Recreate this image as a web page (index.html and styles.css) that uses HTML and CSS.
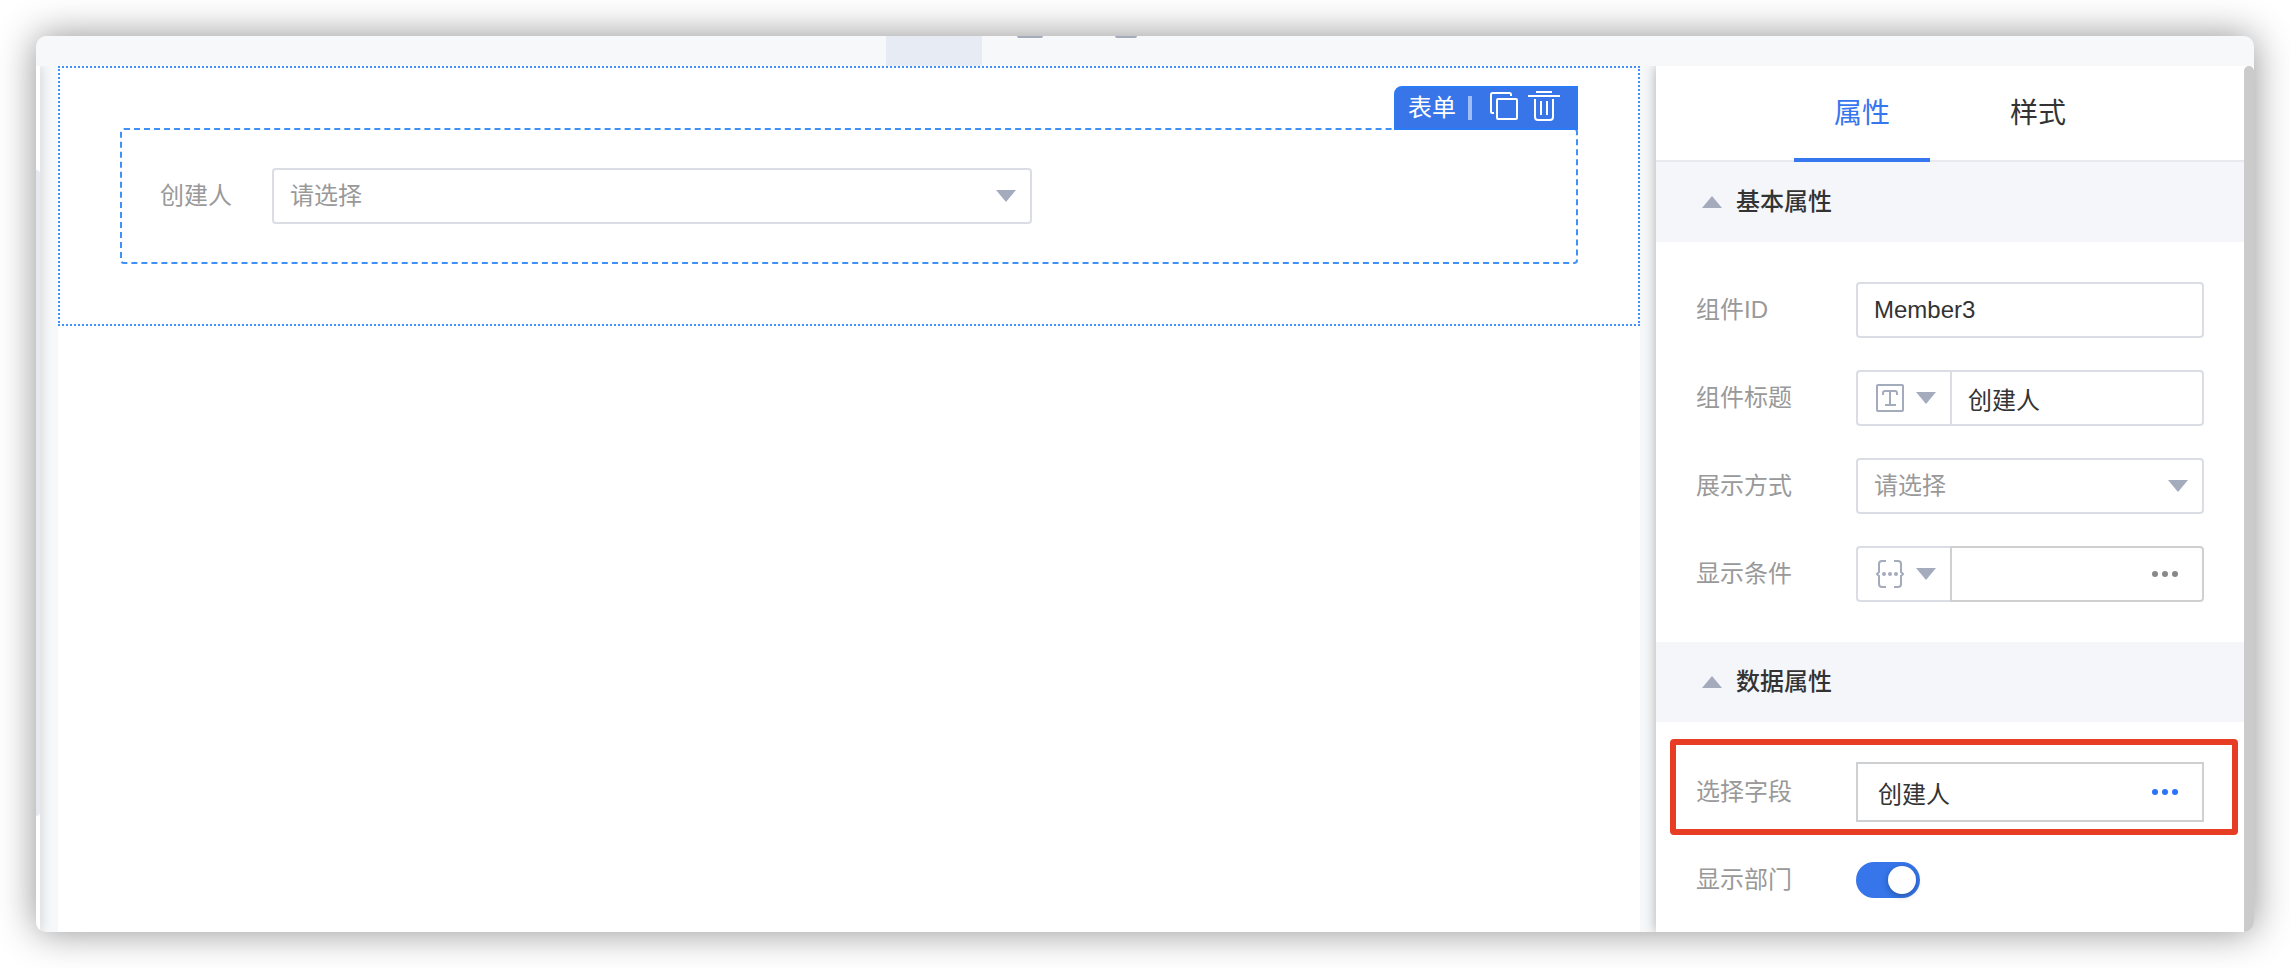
FILE: index.html
```
<!DOCTYPE html>
<html lang="zh-CN">

<head>
    <meta charset="UTF-8">
    <meta name="viewport" content="width=device-width, initial-scale=1.0">
    <title>表单设计</title>
    <link rel="stylesheet" href="styles.css">
</head>

<body>

    <div class="window">
        <header class="topbar">
            <span class="topbar-active"></span>
            <span class="topbar-icon icon-wide"></span>
            <span class="topbar-icon"></span>
        </header>

        <div class="content">
            <div class="side-strip">
                <div class="side-thumb"></div>
            </div>

            <main class="workspace">
                <div class="page">
                    <div class="container">
                        <div class="form-box">
                            <div class="toolbar">
                                <span>表单</span>
                                <span class="divider"></span>
                                <button type="button" class="tool-btn copy-btn" aria-label="复制">
                                    <svg width="28" height="28" viewBox="0 0 28 28" fill="none" stroke="#fff" stroke-width="2">
                                        <path d="M4 21H2.500Q1 21 1 19.500V2.500Q1 1 2.500 1H19.500Q21 1 21 2.500V4" />
                                        <rect x="7" y="7" width="20" height="20" rx="1" />
                                    </svg>
                                </button>
                                <button type="button" class="tool-btn" aria-label="删除">
                                    <svg width="32" height="30" viewBox="0 0 32 30" fill="none" stroke="#fff" stroke-width="2">
                                        <path d="M8 1H24M0 5H32M7 8V26Q7 29 10 29H22Q25 29 25 26V8M13 10V24M19 10V24" />
                                    </svg>
                                </button>
                            </div>
                            <label for="creator">创建人</label>
                            <div class="select-wrap creator-select">
                                <select id="creator">
                                    <option>请选择</option>
                                </select>
                            </div>
                        </div>
                    </div>
                </div>
            </main>

            <aside class="panel">
                <div class="panel-body">
                    <div class="tabs">
                        <button type="button" class="tab active">属性</button>
                        <button type="button" class="tab">样式</button>
                    </div>

                    <h3 class="section-title">基本属性</h3>
                    <div class="section">
                        <div class="row">
                            <label for="componentId">组件ID</label>
                            <input type="text" id="componentId" class="field" value="Member3">
                        </div>
                        <div class="row">
                            <label for="componentTitle">组件标题</label>
                            <div class="group">
                                <button type="button" class="prefix" aria-label="文本类型">
                                    <svg width="28" height="28" viewBox="0 0 28 28" fill="none" stroke="#a3abbd" stroke-width="2">
                                        <rect x="1" y="1" width="26" height="26" rx="1" />
                                        <path d="M7 11V9Q7 7 9 7H19Q21 7 21 9V11M14 7V21M9 21H20" />
                                    </svg>
                                </button>
                                <input type="text" id="componentTitle" class="field" value="创建人">
                            </div>
                        </div>
                        <div class="row">
                            <label for="displayMode">展示方式</label>
                            <div class="select-wrap">
                                <select id="displayMode">
                                    <option>请选择</option>
                                </select>
                            </div>
                        </div>
                        <div class="row">
                            <label for="condition">显示条件</label>
                            <div class="group">
                                <button type="button" class="prefix" aria-label="表达式类型">
                                    <svg width="28" height="28" viewBox="0 0 28 28" fill="none" stroke="#a3abbd" stroke-width="2">
                                        <path d="M10 1H6Q3 1 3 4V12L1 14L3 16V24Q3 27 6 27H10M18 1H22Q25 1 25 4V12L27 14L25 16V24Q25 27 22 27H18" />
                                        <g fill="#a3abbd" stroke="none">
                                            <circle cx="8" cy="14" r="2" />
                                            <circle cx="14" cy="14" r="2" />
                                            <circle cx="20" cy="14" r="2" />
                                        </g>
                                    </svg>
                                </button>
                                <div class="picker">
                                    <input type="text" id="condition" class="field">
                                    <button type="button" class="more" aria-label="更多"><i></i><i></i><i></i></button>
                                </div>
                            </div>
                        </div>
                    </div>

                    <h3 class="section-title">数据属性</h3>
                    <div class="section">
                        <div class="row highlight">
                            <label for="dataField">选择字段</label>
                            <div class="picker picker-large">
                                <input type="text" id="dataField" class="field" value="创建人">
                                <button type="button" class="more more-blue" aria-label="选择字段"><i></i><i></i><i></i></button>
                            </div>
                        </div>
                        <div class="row">
                            <label for="showDept">显示部门</label>
                            <input type="checkbox" id="showDept" class="switch" checked>
                        </div>
                    </div>
                </div>
                <div class="panel-scroll"></div>
            </aside>
        </div>
    </div>

</body>

</html>
```
FILE: styles.css
```
* {
    box-sizing: border-box;
}

body {
    margin: 0;
    padding: 36px;
    background: #fff;
    color: #333;
    font-family: "Liberation Sans", "Noto Sans CJK SC", sans-serif;
    font-size: 24px;
    line-height: 36px;
}

button,
input,
select {
    font: inherit;
    color: inherit;
    margin: 0;
}

button {
    padding: 0;
    border: none;
    background: none;
    cursor: pointer;
}

svg {
    display: block;
}

.window {
    display: flex;
    flex-direction: column;
    height: calc(100vh - 72px);
    border-radius: 10px;
    overflow: hidden;
    background: #f6f8fa;
    box-shadow: 0 0 38px rgba(0, 0, 0, 0.44);
}

/* Top bar */
.topbar {
    flex: none;
    display: flex;
    height: 30px;
    padding-left: 850px;
}

.topbar-active {
    width: 96px;
    margin-right: 35px;
    background: #e7ebf4;
}

.topbar-icon {
    width: 22px;
    height: 2px;
    border-radius: 0 0 2px 2px;
    background: #a3abbd;
}

.icon-wide {
    width: 26px;
    margin-right: 72px;
}

.content {
    flex: 1;
    display: flex;
    min-height: 0;
    overflow: hidden;
}

.side-strip {
    flex: none;
    width: 4px;
    padding: 104px 0 116px;
    background: #fff;
    box-shadow: 0 0 12px rgba(0, 0, 0, 0.3);
}

.side-thumb {
    height: 100%;
    border-radius: 0 4px 4px 0;
    background: #e8e9f0;
}

/* Canvas */
.workspace {
    flex: 1;
    padding: 0 16px 0 18px;
}

.page {
    height: 100%;
    background: #fff;
}

.container {
    padding: 60px;
    border: 2px dotted #4091f7;
}

.form-box {
    position: relative;
    display: flex;
    align-items: center;
    gap: 40px;
    padding: 38px;
    border: 2px dashed #4091f7;
    border-radius: 4px;
}

label {
    color: #999;
}

.toolbar {
    position: absolute;
    right: -2px;
    bottom: 100%;
    display: flex;
    align-items: center;
    height: 44px;
    padding: 0 16px 0 12px;
    border: 2px solid #2c7bf6;
    border-radius: 8px 0 0 0;
    background: #3875e9;
    color: #fff;
}

.divider {
    width: 4px;
    height: 24px;
    margin: 0 18px 0 12px;
    background: #a0bdf5;
}

.tool-btn {
    padding-bottom: 4px;
}

.copy-btn {
    margin-right: 10px;
}

.select-wrap {
    position: relative;
    flex: 1;
}

.creator-select {
    max-width: 760px;
}

/* Arrow */
.select-wrap::after,
.prefix::after {
    content: "";
    border: 10px solid transparent;
    border-top: 12px solid #a3abbd;
    border-bottom: none;
}

.select-wrap::after {
    position: absolute;
    top: 22px;
    right: 16px;
    pointer-events: none;
}

select,
.field {
    display: block;
    width: 100%;
    height: 56px;
    padding: 0 16px;
    border: 2px solid #dadde4;
    border-radius: 4px;
    background: #fff;
    outline: none;
}

select {
    appearance: none;
    color: #999;
}

/* Property panel */
.panel {
    flex: none;
    display: flex;
    width: 598px;
    background: #fff;
    box-shadow: 0 0 12px rgba(0, 0, 0, 0.3);
}

.panel-body {
    flex: 1;
}

.panel-scroll {
    width: 10px;
    border-radius: 5px 5px 0 0;
    background: #cbcbcb;
}

.tabs {
    display: flex;
    justify-content: center;
    gap: 40px;
    height: 96px;
    box-shadow: inset 0 -2px #e7e9ee;
}

.tab {
    width: 136px;
    border-top: 4px solid transparent;
    border-bottom: 4px solid transparent;
    font-size: 28px;
}

.tab.active {
    border-bottom-color: #3676ee;
    color: #3676ee;
}

.section-title {
    display: flex;
    align-items: center;
    gap: 14px;
    height: 80px;
    margin: 0;
    padding: 0 46px;
    background: #f5f6fa;
    font-size: 24px;
    font-weight: 500;
}

.section-title::before {
    content: "";
    border: 10px solid transparent;
    border-top: none;
    border-bottom: 12px solid #a3abbd;
}

.section {
    display: flex;
    flex-direction: column;
    gap: 32px;
    padding: 40px;
}

.row {
    position: relative;
    display: flex;
    align-items: center;
    min-height: 52px;
}

.row label {
    flex: none;
    width: 160px;
}

.group {
    flex: 1;
    display: flex;
}

.prefix {
    flex: none;
    display: flex;
    align-items: center;
    gap: 12px;
    width: 94px;
    padding-left: 18px;
    border: 2px solid #dadde4;
    border-right: none;
    border-radius: 4px 0 0 4px;
}

.group .field {
    border-radius: 0 4px 4px 0;
}

.picker {
    position: relative;
    flex: 1;
}

.picker .field {
    padding-right: 60px;
    border-color: #ced0d2;
}

.picker-large .field {
    height: 60px;
    padding-left: 20px;
    border-radius: 0;
}

.more {
    position: absolute;
    top: 0;
    right: 26px;
    display: flex;
    align-items: center;
    gap: 4px;
    height: 100%;
    color: #888;
}

.more-blue {
    color: #2b73fb;
}

.more i {
    width: 6px;
    height: 6px;
    border-radius: 50%;
    background: currentColor;
}

/* Red frame round the field row */
.highlight::after {
    content: "";
    position: absolute;
    inset: -23px -34px -13px -26px;
    border: 6px solid #e73d25;
    border-radius: 4px;
    pointer-events: none;
}

/* Toggle switch */
.switch {
    appearance: none;
    width: 64px;
    height: 36px;
    padding: 4px;
    border-radius: 18px;
    background: #ccc;
    cursor: pointer;
}

.switch::before {
    content: "";
    display: block;
    width: 28px;
    height: 28px;
    border-radius: 50%;
    background: #fff;
    box-shadow: 0 2px 6px rgba(0, 0, 0, 0.3);
}

.switch:checked {
    background: #3676ea;
}

.switch:checked::before {
    margin-left: auto;
}
```
